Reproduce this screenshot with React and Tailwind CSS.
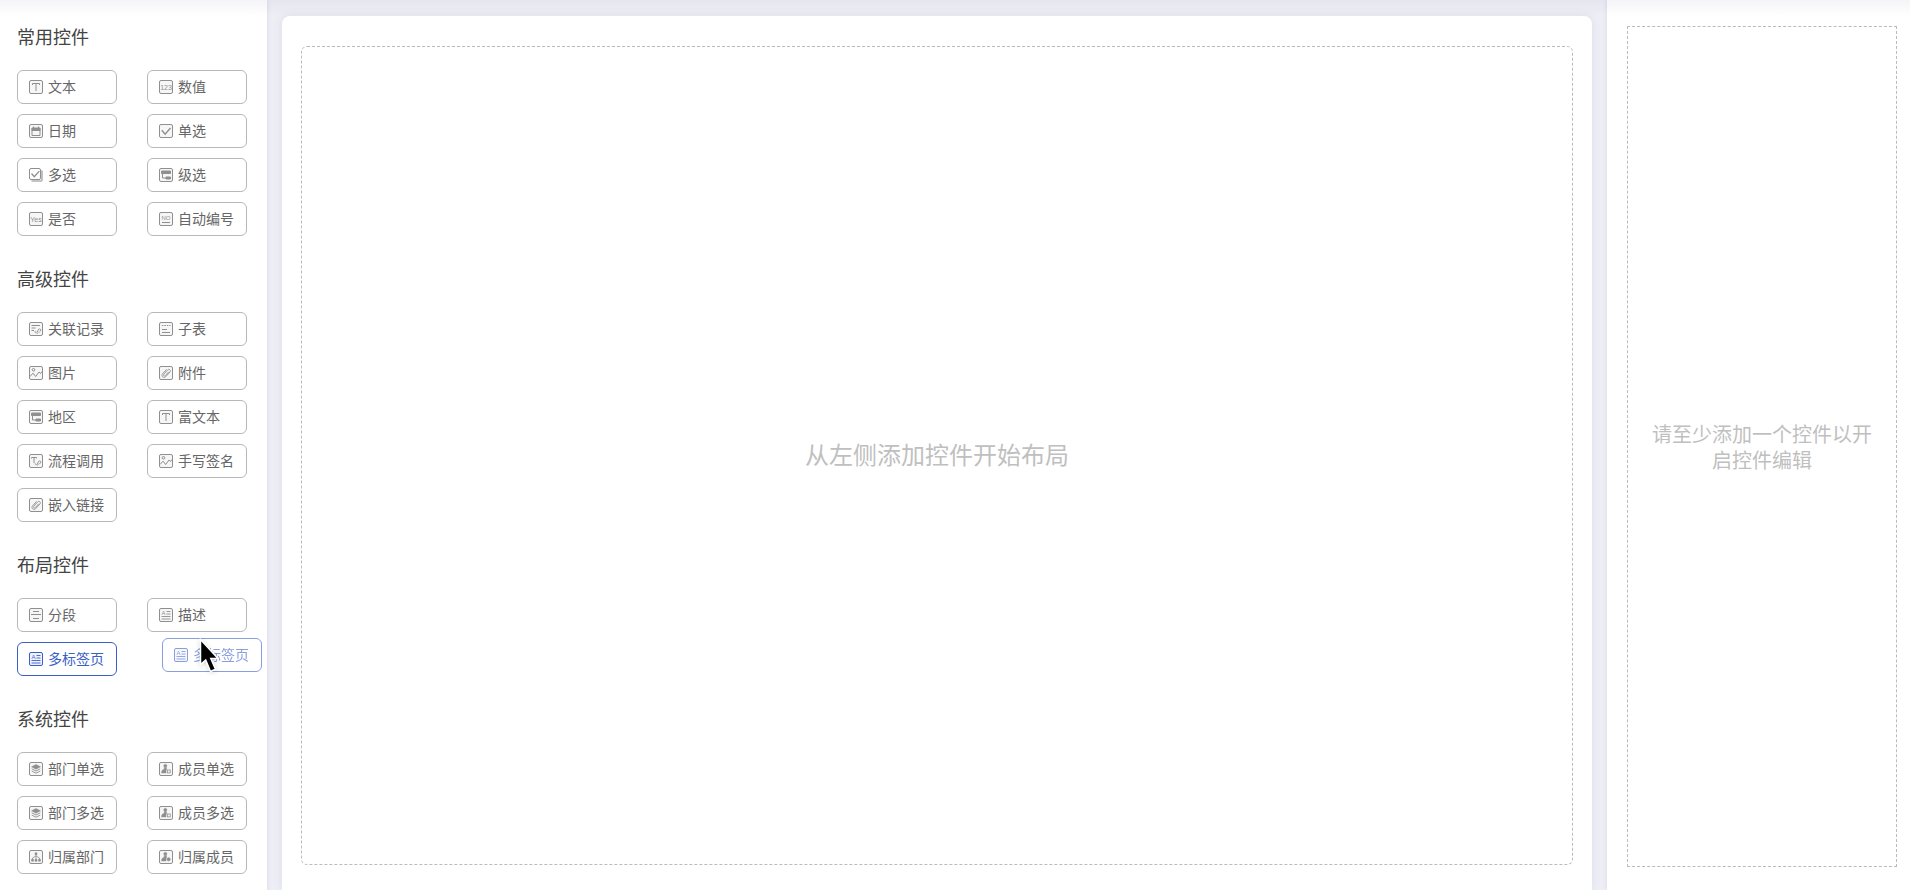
const Frame = () => (
  <rect x="0.5" y="0.5" width="13" height="13" rx="1.5" fill="currentColor" fillOpacity="0.08" />
);

const Glyph = ({ x = 7, y, size, children }) => (
  <text
    x={x}
    y={y}
    fontSize={size}
    textAnchor="middle"
    fill="currentColor"
    stroke="none"
    className="font-['Liberation_Sans_Narrow','Liberation_Sans',sans-serif]"
  >
    {children}
  </text>
);

const icons = {
  text: (
    <>
      <Frame />
      <path d="M3.5 5V3.5h7V5M7 3.5V11" />
    </>
  ),
  number: (
    <>
      <Frame />
      <Glyph y={9.5} size={7}>123</Glyph>
    </>
  ),
  date: (
    <>
      <Frame />
      <path d="M3 4.5h8v7H3z" />
      <path d="M3 4h8v2.5H3zM4.5 2.5V4M9.5 2.5V4" fill="currentColor" />
    </>
  ),
  check: (
    <>
      <Frame />
      <path strokeWidth="1.4" d="M2.8 6.2l3.3 4 5.4-6.2" />
    </>
  ),
  multi: (
    <>
      <path d="M13 2.5V12a1 1 0 0 1-1 1H2.5" strokeWidth="1.6" strokeOpacity="0.7" />
      <rect x="0.5" y="0.5" width="11" height="11" rx="1.5" />
      <path strokeWidth="1.3" d="M2.5 5.5l2.8 3.2 5-5.6" />
    </>
  ),
  cascade: (
    <>
      <Frame />
      <path fill="currentColor" d="M2.5 3h9v2.5h-9zM7 9h4.500v2H7z" />
      <path d="M3.500 6v4H7" />
    </>
  ),
  yes: (
    <>
      <Frame />
      <Glyph y={9.5} size={7}>Yes</Glyph>
    </>
  ),
  serial: (
    <>
      <Frame />
      <Glyph y={7.5} size={6}>NO</Glyph>
      <path d="M3 10.5h8" />
    </>
  ),
  relation: (
    <>
      <Frame />
      <path d="M2.5 3.5H11M2.5 6h4M2.5 8.5H5" />
      <path
        strokeWidth="0.9"
        d="M8.5 8.500l1.200-1.300c1.300-1 2.800.5 1.800 1.800l-1.200 1.200M9.600 8.300l-1.900 1.900c-1 1.300-2.300-.1-1.300-1.300M7.800 11.700l1.800-1.500"
      />
    </>
  ),
  subtable: (
    <>
      <Frame />
      <path strokeDasharray="1.5 1" d="M2.8 3.5h8.700" />
      <path d="M3 7.5h5M3 10.5h8" />
    </>
  ),
  image: (
    <>
      <Frame />
      <circle cx="4.5" cy="3.8" r="1.3" />
      <path d="M1 10.5l3-3.300 2.700 3.300L10 6l1.600 1.500 1.400-2" />
    </>
  ),
  clip: (
    <>
      <Frame />
      <path
        strokeWidth="0.9"
        d="M9.800 5.700l-3.600 4c-.9 1-2.400-.3-1.500-1.400l4-4.400c1.400-1.500 3.600.4 2.300 2l-4.300 4.800c-2 2-5-.5-3.200-2.800l4-4.500"
      />
    </>
  ),
  flow: (
    <>
      <Frame />
      <path d="M2.500 4.500v-1h5v1M5 3.500V9" />
      <path
        strokeWidth="0.9"
        d="M8.600 8.500l1.200-1.300c1.300-1 2.700.4 1.700 1.700l-1.200 1.200M9.700 8.500l-1.900 1.800c-1 1.200-2.200-.1-1.300-1.200M8 11.500l1.700-1.400"
      />
    </>
  ),
  section: (
    <>
      <Frame />
      <path d="M4 3.500h6M2 6.500h10M4 10.500h6" />
    </>
  ),
  article: (
    <>
      <Frame />
      <Glyph x={4.5} y={7} size={6}>A</Glyph>
      <path d="M7.500 3.500h4M7.500 6h4M2.500 8.500h9M2.500 11h9" strokeWidth="0.9" />
    </>
  ),
  layers: (
    <>
      <Frame />
      <path fill="currentColor" strokeWidth="0.5" d="M7 2.500l4.500 2.300L7 7.200 2.500 4.800z" />
      <path strokeWidth="0.9" d="M2.700 6.800L7 9l4.300-2.200M2.700 9L7 11.200 11.300 9" />
    </>
  ),
  member: (
    <>
      <Frame />
      <circle cx="6.300" cy="3.800" r="1.600" fill="currentColor" strokeWidth="0.4" />
      <path fill="currentColor" strokeWidth="0.4" d="M5.200 5.500h2.300v2.500H7v3H2.500c0-2.300.8-3.300 2.700-3.800z" />
      <rect x="8.300" y="8" width="2.900" height="2.900" strokeWidth="0.8" />
    </>
  ),
  tree: (
    <>
      <Frame />
      <path strokeWidth="0.8" d="M7 4v6M3.500 10V8L7 6l3.500 2v2" />
      <path fill="currentColor" strokeWidth="0.5" d="M6 2.800h2v2H6zM2.500 9.300h2v2h-2zM6 9.300h2v2H6zM9.500 9.300h2v2h-2z" />
    </>
  ),
  owner: (
    <>
      <Frame />
      <circle cx="6.300" cy="3.800" r="1.600" fill="currentColor" strokeWidth="0.4" />
      <path fill="currentColor" strokeWidth="0.4" d="M5.200 5.500h2.300v2.500H7v3H2.500c0-2.300.8-3.300 2.700-3.800z" />
      <circle cx="9.600" cy="9.300" r="1.700" fill="currentColor" strokeWidth="0.4" />
    </>
  ),
};

const groups = [
  {
    title: "常用控件",
    items: [
      ["text", "文本"],
      ["number", "数值"],
      ["date", "日期"],
      ["check", "单选"],
      ["multi", "多选"],
      ["cascade", "级选"],
      ["yes", "是否"],
      ["serial", "自动编号"],
    ],
  },
  {
    title: "高级控件",
    items: [
      ["relation", "关联记录"],
      ["subtable", "子表"],
      ["image", "图片"],
      ["clip", "附件"],
      ["cascade", "地区"],
      ["text", "富文本"],
      ["flow", "流程调用"],
      ["image", "手写签名"],
      ["clip", "嵌入链接"],
    ],
  },
  {
    title: "布局控件",
    items: [
      ["section", "分段"],
      ["article", "描述"],
      ["article", "多标签页"],
    ],
  },
  {
    title: "系统控件",
    items: [
      ["layers", "部门单选"],
      ["member", "成员单选"],
      ["layers", "部门多选"],
      ["member", "成员多选"],
      ["tree", "归属部门"],
      ["owner", "归属成员"],
    ],
  },
];

const dragging = "多标签页";

function ControlIcon({ name, active }) {
  return (
    <svg
      viewBox="0 0 14 14"
      fill="none"
      stroke="currentColor"
      strokeWidth="1"
      aria-hidden="true"
      className={`size-3.5 shrink-0 ${active ? "text-[#3b5fc8]" : "text-[#8f8f8f]"}`}
    >
      {icons[name]}
    </svg>
  );
}

function ControlButton({ icon, label, active }) {
  return (
    <button
      type="button"
      className={`flex h-[34px] w-[100px] items-center gap-[5px] rounded-md border bg-white pl-[11px] text-sm whitespace-nowrap ${
        active ? "border-[#3b5fc8] text-[#3b5fc8]" : "border-[#b8b8b8] text-[#666666]"
      }`}
    >
      <ControlIcon name={icon} active={active} />
      <span className="pb-0.5">{label}</span>
    </button>
  );
}

function Pointer() {
  return (
    <svg
      viewBox="0 0 20 36"
      className="absolute top-0 left-[37px] h-9 w-5 drop-shadow-sm"
      aria-hidden="true"
    >
      <path
        d="M1.500 1.500v25l5.200-4.500 4.800 11.500 5-2.200-4.700-10.800h7.200z"
        fill="#000000"
        stroke="#ffffff"
        strokeWidth="1.500"
      />
    </svg>
  );
}

function ControlGroup({ title, items }) {
  return (
    <section>
      <h2 className="mb-[22px] text-lg leading-6 text-[#444444]">{title}</h2>
      <div className="grid grid-cols-[100px_100px] gap-x-[30px] gap-y-2.5">
        {items.map(([icon, label]) =>
          label === dragging ? (
            <div key={label} className="relative">
              <ControlButton icon={icon} label={label} active />
              {/* drag preview */}
              <div className="absolute -top-1 left-[145px]">
                <div className="opacity-60">
                  <ControlButton icon={icon} label={label} active />
                </div>
                <Pointer />
              </div>
            </div>
          ) : (
            <ControlButton key={label} icon={icon} label={label} />
          )
        )}
      </div>
    </section>
  );
}

export default function App() {
  return (
    <div className="relative flex min-h-screen bg-[#eeeff5] font-['Noto_Sans_CJK_SC',sans-serif]">
      {/* CONTROLS */}
      <aside className="z-10 flex w-[267px] shrink-0 flex-col gap-[30px] bg-white px-[17px] pt-6 pb-4 shadow-[0_0_5px_rgba(120,120,170,0.2)]">
        {groups.map((group) => (
          <ControlGroup key={group.title} {...group} />
        ))}
      </aside>

      {/* CANVAS */}
      <main className="flex min-w-0 flex-1 px-[15px] pt-4">
        <div className="flex flex-1 rounded-t-lg bg-white px-[19px] pt-[30px] pb-[25px] shadow-[0_0_10px_rgba(120,120,190,0.16)]">
          <div className="flex flex-1 items-center justify-center rounded-md border border-dashed border-[#bbbbbb] pb-1">
            <p className="text-2xl text-[#bfbfbf]">从左侧添加控件开始布局</p>
          </div>
        </div>
      </main>

      {/* PROPERTIES */}
      <aside className="z-10 flex w-[303px] shrink-0 bg-white pt-[26px] pr-[13px] pb-[23px] pl-5 shadow-[0_0_5px_rgba(120,120,170,0.2)]">
        <div className="flex flex-1 items-center justify-center border border-dashed border-[#bbbbbb] px-5">
          <p className="text-center text-xl leading-[26px] text-[#bfbfbf]">
            请至少添加一个控件以开启控件编辑
          </p>
        </div>
      </aside>

      {/* shade cast by the top bar */}
      <div className="pointer-events-none absolute inset-x-0 top-0 z-20 h-4 bg-linear-to-b from-[#50508c]/6 to-transparent" />
    </div>
  );
}
